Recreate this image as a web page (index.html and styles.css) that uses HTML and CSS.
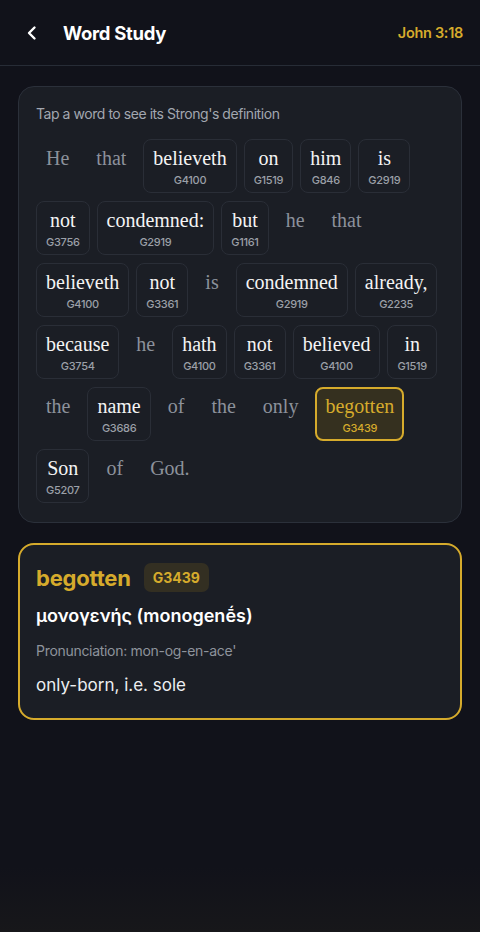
FILE: index.html
```html
<!DOCTYPE html>
<html lang="en">
<head>
<meta charset="utf-8">
<title>Word Study</title>
<link rel="stylesheet" href="styles.css">
</head>
<body>
<div class="screen">
  <header class="topbar">
    <div class="left">
      <svg class="back" width="20" height="20" viewBox="0 0 20 20" aria-hidden="true"><path d="M12.5 4.5 L7 10 L12.5 15.5" fill="none" stroke="#ffffff" stroke-width="2.4" stroke-linecap="round" stroke-linejoin="round"/></svg>
      <h1 class="title">Word Study</h1>
    </div>
    <div class="ref">John 3:18</div>
  </header>

  <main class="content">
    <section class="card verse">
      <p class="hint">Tap a word to see its Strong's definition</p>
      <div class="words">
        <span class="w plain"><span class="t">He</span></span>
        <span class="w plain"><span class="t">that</span></span>
        <span class="w chip"><span class="t">believeth</span><span class="n">G4100</span></span>
        <span class="w chip"><span class="t">on</span><span class="n">G1519</span></span>
        <span class="w chip"><span class="t">him</span><span class="n">G846</span></span>
        <span class="w chip"><span class="t">is</span><span class="n">G2919</span></span>
        <span class="w chip"><span class="t">not</span><span class="n">G3756</span></span>
        <span class="w chip"><span class="t">condemned:</span><span class="n">G2919</span></span>
        <span class="w chip"><span class="t">but</span><span class="n">G1161</span></span>
        <span class="w plain"><span class="t">he</span></span>
        <span class="w plain"><span class="t">that</span></span>
        <span class="w chip"><span class="t">believeth</span><span class="n">G4100</span></span>
        <span class="w chip"><span class="t">not</span><span class="n">G3361</span></span>
        <span class="w plain"><span class="t">is</span></span>
        <span class="w chip"><span class="t">condemned</span><span class="n">G2919</span></span>
        <span class="w chip"><span class="t">already,</span><span class="n">G2235</span></span>
        <span class="w chip"><span class="t">because</span><span class="n">G3754</span></span>
        <span class="w plain"><span class="t">he</span></span>
        <span class="w chip"><span class="t">hath</span><span class="n">G4100</span></span>
        <span class="w chip"><span class="t">not</span><span class="n">G3361</span></span>
        <span class="w chip"><span class="t">believed</span><span class="n">G4100</span></span>
        <span class="w chip"><span class="t">in</span><span class="n">G1519</span></span>
        <span class="w plain"><span class="t">the</span></span>
        <span class="w chip"><span class="t">name</span><span class="n">G3686</span></span>
        <span class="w plain"><span class="t">of</span></span>
        <span class="w plain"><span class="t">the</span></span>
        <span class="w plain"><span class="t">only</span></span>
        <span class="w chip active"><span class="t">begotten</span><span class="n">G3439</span></span>
        <span class="w chip"><span class="t">Son</span><span class="n">G5207</span></span>
        <span class="w plain"><span class="t">of</span></span>
        <span class="w plain"><span class="t">God.</span></span>
      </div>
    </section>

    <section class="card def">
      <div class="def-head">
        <h2 class="def-word">begotten</h2>
        <span class="badge">G3439</span>
      </div>
      <p class="greek">μονογενής (monogenḗs)</p>
      <p class="pron">Pronunciation: mon-og-en-ace'</p>
      <p class="meaning">only-born, i.e. sole</p>
    </section>
  </main>
</div>
</body>
</html>
```

FILE: styles.css
```css
* { box-sizing: border-box; }

html, body {
  margin: 0;
  padding: 0;
  background: #11121a;
}

body {
  font-family: Inter, "Noto Sans", "DejaVu Sans", sans-serif;
  color: #f2f2f2;
}

.screen {
  width: 480px;
  min-height: 932px;
  background: linear-gradient(to bottom, #11121a 0%, #11121a 93%, #17171a 100%);
}

.topbar {
  height: 66px;
  display: flex;
  align-items: center;
  justify-content: space-between;
  padding: 0 17px 0 22px;
  border-bottom: 1px solid #272c36;
}

.left {
  display: flex;
  align-items: center;
}

.back {
  display: block;
  margin-top: 1px;
}

.title {
  margin: 0 0 0 21px;
  font-size: 18.5px;
  font-weight: 700;
  letter-spacing: -0.3px;
  color: #ffffff;
}

.ref {
  font-size: 14.5px;
  font-weight: 600;
  color: #d6ab2c;
  letter-spacing: -0.3px;
}

.content {
  padding: 20px 18px;
  display: flex;
  flex-direction: column;
  gap: 20px;
}

.card {
  background: #1b1e25;
  border-radius: 16px;
}

.verse {
  border: 1px solid #2b303a;
  padding: 17px 17px 19px;
}

.hint {
  margin: 0;
  font-size: 14px;
  line-height: 20px;
  color: #a2a7b0;
  letter-spacing: -0.45px;
}

.words {
  margin-top: 15px;
  display: flex;
  flex-wrap: wrap;
  align-items: flex-start;
  column-gap: 7px;
  row-gap: 8px;
}

.w {
  display: flex;
  flex-direction: column;
  align-items: center;
  border: 1px solid transparent;
  border-radius: 8px;
  padding: 6px 9px 5px;
}

.t {
  font-family: "Liberation Serif", "DejaVu Serif", serif;
  font-size: 20px;
  line-height: 24px;
  color: #f4f4f4;
}

.plain .t {
  color: #8c919b;
}

.n {
  margin-top: 3px;
  font-size: 11px;
  line-height: 14px;
  font-weight: 500;
  color: #9ba0a8;
  letter-spacing: -0.3px;
}

.chip {
  border-color: #2a2e37;
  background: #1b1e25;
}

.chip.active {
  border: 2px solid #d6ab2c;
  background: #35301f;
  padding: 5px 8px 4px;
}

.chip.active .t,
.chip.active .n {
  color: #d6ab2c;
}

.def {
  border: 2px solid #d6ab2c;
  padding: 18px 16px 21px;
}

.def-head {
  display: flex;
  align-items: center;
  gap: 13px;
  height: 29px;
}

.def-word {
  margin: 0;
  font-size: 22px;
  font-weight: 700;
  color: #d6ab2c;
  letter-spacing: -0.2px;
}

.badge {
  display: inline-flex;
  align-items: center;
  justify-content: center;
  height: 29px;
  padding: 0 9px;
  border-radius: 7px;
  background: #332f22;
  color: #d6ab2c;
  font-size: 14px;
  font-weight: 700;
}

.greek {
  margin: 12px 0 0;
  font-size: 18px;
  line-height: 24px;
  font-weight: 600;
  color: #ffffff;
}

.pron {
  margin: 13px 0 0;
  font-size: 14px;
  line-height: 20px;
  color: #8e939c;
  letter-spacing: -0.3px;
}

.meaning {
  margin: 12px 0 0;
  font-size: 17px;
  line-height: 24px;
  color: #eceef1;
}
```
